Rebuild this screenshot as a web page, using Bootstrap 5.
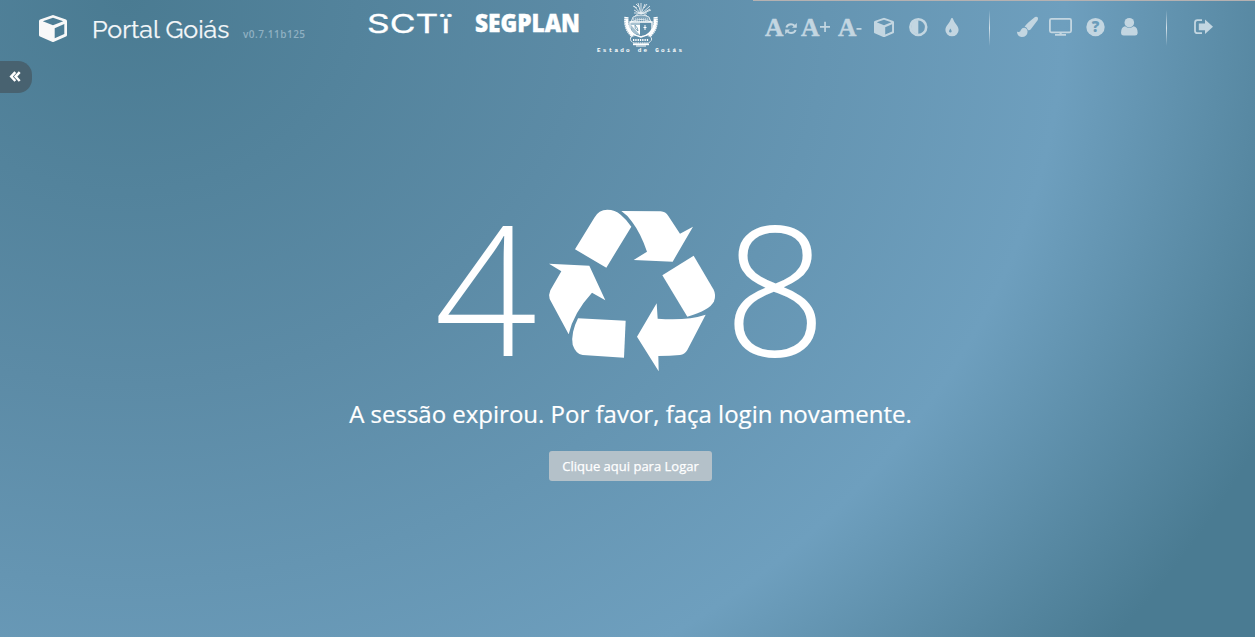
<!DOCTYPE html>
<html lang="pt-BR">
<head>
<meta charset="utf-8">
<meta name="viewport" content="width=device-width, initial-scale=1">
<title>Portal Goiás</title>
<link rel="stylesheet" href="https://cdn.jsdelivr.net/npm/bootstrap@5.3.0/dist/css/bootstrap.min.css">
<style>
body{font-family:"Open Sans",sans-serif;color:#fff;height:637px;background:radial-gradient(1253px 1040px at 125px 0,#4a7b92 0,#5c8ba6 37%,#6e9fbe 75%,#4a7b92 100%)}
svg{display:block;flex:none;overflow:visible}
.topbar{height:56px}
.brandbox{width:368px;padding-left:39px;flex:none}
.brandcube{width:28px;height:27px;color:#f8f8f8}
.brandname{font-family:Raleway,"Noto Sans",sans-serif;font-size:25px;color:#f4f7f9;margin-left:25px;width:151px;line-height:1;padding-top:2px;-webkit-text-stroke:.25px #f4f7f9}
.ver{font-weight:600;font-size:10px;letter-spacing:.5px;color:#8fb0c2;line-height:1;padding-top:11px}
.seg{margin-left:24px}
.crest{margin-left:17px}
.tools{color:#c3d6e1;height:54px;border-top:1px solid #b5b1b1;margin-left:70px;padding:9px 0 0 12px;width:502px}
.tools svg{height:36px}
.sep{width:1px;height:36px;background:linear-gradient(transparent,#d5e2ea 50%,transparent)}
.toggle-tab{width:32px;height:32px;margin-top:5px;border:0;border-radius:0 14px 14px 0;background:#486270}
.toggle-tab:hover{background:#486270}
main{padding-left:6px}
.code{height:201px;margin-top:104px}
.recycle{margin-top:12px}
.num{font-weight:300;font-size:180px;line-height:180px;height:180px}
.msg{font-size:24px;line-height:32px;margin:0 0 21px;-webkit-text-stroke:.2px #fff}
.btn-go,.btn-go:hover{background:#b4c1c9;color:#fff;font-size:13px;line-height:18px;height:30px;width:163px;border:0;border-radius:3px;padding:6px 0;-webkit-text-stroke:.25px #fff}
</style>
</head>
<body class="overflow-hidden">
<svg width="0" height="0" class="position-absolute"><defs>
<symbol id="cube" viewBox="0 0 28 27"><path fill="currentColor" fill-rule="evenodd" d="M14 0 27 4.5Q28 5 28 6V20Q28 21 27 21.6L15 26.7Q14 27.2 13 26.7L1 21.6Q0 21 0 20V6Q0 5 1 4.5ZM14 2.7 3.8 6.3 14 10.3 24.2 6.3ZM15.7 13.3V23.3L25.3 19V9Z"/></symbol></defs></svg>
<header class="topbar d-flex">
<div class="brandbox d-flex align-items-center"><svg class="brandcube"><use href="#cube"/></svg><span class="brandname">Portal Goiás</span><span class="ver">v0.7.11b125</span></div>
<svg width="83" height="50"><text x="-1" y="32.7" font-family="Inter,sans-serif" font-weight="400" font-size="25" fill="#fff" stroke="#fff" stroke-width=".3" textLength="83" lengthAdjust="spacingAndGlyphs">SCTï</text></svg>
<svg class="seg" width="105" height="50"><text x="0" y="32.4" font-family="Open Sans,sans-serif" font-weight="800" font-size="24" fill="#fff" stroke="#fff" stroke-width=".4" textLength="105" lengthAdjust="spacingAndGlyphs">SEGPLAN</text></svg>
<svg class="crest" width="86" height="56" viewBox="0 0 86 56" fill="none" stroke="#fff">
<g stroke-width=".9" opacity=".85"><path d="M44 14 37 6M44 14 41 3M44 14V3M44 14 48 4M44 14 53 6M37 10 44 14 54 10M36 6 40 8M39 4 42 7M50 4 47 8M53 9 48 12M37 13H50M38 16 Q44 10 50 16"/><path d="M36 17Q44 13 52 17L54 22Q44 17 34 22Z" fill="#fff" fill-opacity=".25"/><path d="M36 19H53M38 21H50" stroke-dasharray="1 1"/></g>
<path d="M33 22H55V29Q53 35 44 37Q35 35 33 29Z" stroke-width="1.3"/>
<path d="M34 23H43V35Q35 34 34 28Z" fill="#fff" opacity=".45" stroke="none"/><path d="M34 25 43 35V25Z" fill="#fff" stroke="none"/><path d="M38 25Q41 28 41 31Q37 29 38 25Z" stroke="#6090aa" stroke-width=".8"/><path d="M48 25v5M46.5 27.5h3" stroke-width="1"/>
<path d="M29.5 17Q28 29 36 35.5M58.5 17Q60 29 52 35.5" stroke-width="4.2" stroke-dasharray="1.5 .5"/><path d="M30 19Q29 29 36 35.5M58 19Q59 29 52 35.5" stroke-width="2.6"/>
<path d="M34 37Q39 34 44 37Q49 34 54 37Q56 41 51 43H37Q32 41 34 37Z" stroke-dasharray="1.6 .6" stroke-width="1"/><path d="M36 40H52" stroke-width="2" stroke-dasharray="1.3 1"/><path d="M36 44.3H52" stroke-width="1.8"/><path d="M39 46H49" stroke-width="1"/>
<text x="0" y="52" fill="#fff" stroke="none" font-family="Liberation Mono,monospace" font-size="6" font-weight="700" textLength="85">Estado de Goiás</text></svg>
<div class="tools d-flex flex-none">
<!-- font size -->
<svg width="109" viewBox="765 10 109 36" fill="currentColor" font-family="Liberation Serif,serif" font-weight="700" font-size="25.5"><g stroke="currentColor" stroke-width=".5"><text x="765" y="36">A</text><text x="801" y="36">A</text><text x="838" y="36">A</text></g><path d="M820 26h10v1.7h-10zM824.2 21.7h1.7V32h-1.7zM856.5 28h5v1.7h-5z"/><g fill="none" stroke="currentColor" stroke-width="2"><path d="M786.4 27.5Q787.4 24.2 791 24.2Q793 24.2 794.5 25.7M795.6 30Q794.6 33 791 33Q789 33 787.6 31.6"/></g><path d="M796.8 23v4.8H792zM785.2 34.2v-4.8H790z"/></svg>
<svg width="35" viewBox="874 10 35 36" fill="currentColor"><use href="#cube" x="874" y="17.5" width="20" height="20"/></svg>
<svg width="37" viewBox="909 10 37 36"><circle cx="918.3" cy="27.1" r="7.9" fill="none" stroke="currentColor" stroke-width="2.6"/><path d="M918.3 20a7.1 7.1 0 0 0 0 14.2z" fill="currentColor"/></svg>
<svg width="43" viewBox="946 10 43 36"><path fill="currentColor" fill-rule="evenodd" d="M952 18Q952.9 18 953.2 19.2C954.2 23 958.6 25.6 958.6 30A6.6 6.3 0 0 1 945.4 30C945.4 25.6 949.8 23 950.8 19.2Q951.1 18 952 18ZM950.3 28.6Q949 30.5 949 31.5A1.4 1.5 0 0 0 951.7 31.5Q951.7 30.5 950.3 28.6Z"/></svg>
<span class="sep"></span>
<svg width="59" viewBox="990 10 59 36" fill="currentColor"><path d="M1035 17Q1038.8 16.2 1037.8 20L1030.6 29.6Q1028.8 31 1027.6 29.4Q1026.8 26.8 1024.6 26.8Q1026 24 1035 17Z"/><path d="M1024 27.8Q1027 28 1027.6 31.4Q1027.4 36.8 1021.6 37Q1017.4 36.6 1016.9 31.5Q1020 33.2 1021 29.8Q1022 27.8 1024 27.8Z"/></svg>
<svg width="37" viewBox="1049 10 37 36"><rect x="1049.9" y="18.9" width="21.2" height="13.4" rx="1.5" fill="none" stroke="currentColor" stroke-width="1.8"/><path fill="currentColor" d="M1059.5 32h2.2v2h4.3v1.8h-11V34h4.5z"/></svg>
<svg width="35" viewBox="1086 10 35 36"><circle cx="1095.5" cy="27.1" r="9.2" fill="currentColor"/><text x="1095.5" y="32.4" text-anchor="middle" font-family="Open Sans,sans-serif" font-size="15" font-weight="800" fill="#6a9cba">?</text></svg>
<svg width="45" viewBox="1121 10 45 36" fill="currentColor"><circle cx="1129.3" cy="22.7" r="4.8"/><path d="M1125 26.3Q1129.3 29.6 1133.6 26.3Q1137.7 27 1137.7 33Q1137.5 35.5 1135 35.6H1123.6Q1121.2 35.5 1121 33Q1121 27 1125 26.3Z"/></svg>
<span class="sep"></span>
<svg width="50" viewBox="1167 10 50 36"><path d="M1202 20.2H1197.5Q1195 20.2 1195 22.7V30.7Q1195 33.2 1197.5 33.2H1202" fill="none" stroke="currentColor" stroke-width="1.8"/><path fill="currentColor" d="M1198.8 23.5H1205V19.4L1213 26.8 1205 34V30.3H1198.8Z"/></svg>
</div>
</header>
<button class="toggle-tab btn p-0 d-block" aria-label="Menu"><svg width="32" height="32" fill="none" stroke="#fff" stroke-width="2.5"><path d="M15.3 11.2 11.2 15.6 15.3 20M19.7 11.2 15.6 15.6 19.7 20"/></svg></button>
<main class="d-flex flex-column align-items-center"><div class="code d-flex"><span class="num">4</span>
<svg class="recycle" width="187" height="163" viewBox="351 58 561 489" fill="#fff"><path d="M465 179 523 84Q536 60 562 60Q585 60 602 75Q618 88 634 111L559 234Z"/><path d="M604 64 722 65Q737 66 745 79L780 132 819 111 758 216 641 211 681 186Q662 130 636 96Q622 76 604 64Z"/><path d="M821 198 881 300Q889 316 882 335Q870 362 802 381L727 257Z"/><path d="M857 375 802 481Q794 494 780 496 750 499 715 499L716 545 651 441 710 341 713 387Q800 394 857 375Z"/><path d="M474 386 617 393 612 504 488 496Q468 494 458 465Q452 430 474 386Z"/><path d="M387 222 508 228 556 332 516 309Q460 370 446 434L389 328Q385 316 391 302L424 245Z"/></svg>
<span class="num">8</span></div>
<p class="msg">A sessão expirou. Por favor, faça login novamente.</p><button class="btn btn-go">Clique aqui para Logar</button></main>
<script src="https://cdn.jsdelivr.net/npm/bootstrap@5.3.0/dist/js/bootstrap.bundle.min.js"></script>
</body>
</html>
